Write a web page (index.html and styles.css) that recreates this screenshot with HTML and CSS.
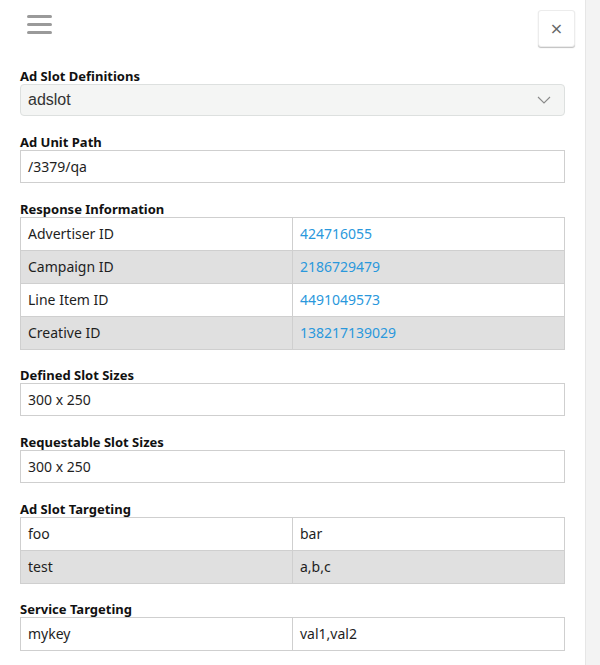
FILE: index.html
```html
<!DOCTYPE html>
<html>
<head>
<meta charset="utf-8">
<link rel="stylesheet" href="styles.css">
</head>
<body>
<div class="app">
  <div class="main">
    <div class="header">
      <div class="hamburger"><span></span><span></span><span></span></div>
      <button class="close">×</button>
    </div>
    <div class="content">
      <div class="label first">Ad Slot Definitions</div>
      <div class="select">
        <span>adslot</span>
        <svg class="chev" width="14" height="8" viewBox="0 0 14 8"><path d="M1 1 L7 7 L13 1" fill="none" stroke="#8a8a8a" stroke-width="1.1"/></svg>
      </div>

      <div class="label">Ad Unit Path</div>
      <div class="box">/3379/qa</div>

      <div class="label">Response Information</div>
      <table class="tbl">
        <tr><td>Advertiser ID</td><td class="link">424716055</td></tr>
        <tr><td>Campaign ID</td><td class="link">2186729479</td></tr>
        <tr><td>Line Item ID</td><td class="link">4491049573</td></tr>
        <tr><td>Creative ID</td><td class="link">138217139029</td></tr>
      </table>

      <div class="label after-table">Defined Slot Sizes</div>
      <div class="box">300 x 250</div>

      <div class="label">Requestable Slot Sizes</div>
      <div class="box">300 x 250</div>

      <div class="label">Ad Slot Targeting</div>
      <table class="tbl">
        <tr><td>foo</td><td>bar</td></tr>
        <tr><td>test</td><td>a,b,c</td></tr>
      </table>

      <div class="label after-table">Service Targeting</div>
      <table class="tbl">
        <tr><td>mykey</td><td>val1,val2</td></tr>
      </table>
    </div>
  </div>
  <div class="scrollbar"></div>
</div>
</body>
</html>
```

FILE: styles.css
```css
html, body {
  margin: 0;
  padding: 0;
  background: #fff;
}
body {
  font-family: "Noto Sans", "Open Sans", sans-serif;
  color: #1e1e1e;
  overflow: hidden;
}
.app {
  display: flex;
  width: 600px;
  height: 665px;
}
.main {
  flex: 1;
  overflow: hidden;
}
.scrollbar {
  width: 14px;
  border-left: 1px solid #e6e6e6;
  background: #f3f3f3;
}
.header {
  display: flex;
  justify-content: space-between;
  align-items: flex-start;
  padding: 10px 10px 0 27px;
  box-sizing: border-box;
  height: 67px;
}
.hamburger {
  display: flex;
  flex-direction: column;
  gap: 5px;
  margin-top: 5px;
}
.hamburger span {
  display: block;
  width: 25px;
  height: 3px;
  border-radius: 2px;
  background: #9a9a9a;
}
.close {
  width: 37px;
  height: 37px;
  border: 1px solid #ececec;
  border-radius: 3px;
  background: #fff;
  box-shadow: 0 1px 1px rgba(0,0,0,0.25);
  color: #666;
  font-family: "DejaVu Sans", sans-serif;
  font-size: 16px;
  line-height: 1;
  padding: 0;
}
.content {
  padding: 0 20px;
}
.label {
  font-weight: 700;
  font-size: 13px;
  line-height: 15px;
  padding-top: 2px;
  color: #111;
  margin-top: 17px;
}
.label.first {
  margin-top: 0;
}
.label.after-table {
  margin-top: 16px;
}
.select {
  display: flex;
  align-items: center;
  justify-content: space-between;
  height: 32px;
  box-sizing: border-box;
  border: 1px solid #dde0df;
  border-radius: 4px;
  background: #f4f5f4;
  padding: 0 13px 0 7px;
  font-family: "Liberation Sans", Arial, sans-serif;
  font-size: 16px;
  color: #333;
}
.box {
  height: 33px;
  box-sizing: border-box;
  border: 1px solid #cfcfcf;
  padding: 0 7px;
  font-size: 14px;
  line-height: 31px;
}
.tbl {
  width: 100%;
  border-collapse: collapse;
  font-size: 14px;
}
.tbl td {
  width: 50%;
  border: 1px solid #cfcfcf;
  height: 33px;
  padding: 0 7px;
  box-sizing: border-box;
  line-height: 30px;
}
.tbl tr:nth-child(even) td {
  background: #e0e0e0;
}
.link {
  color: #2a98dc;
}
```
